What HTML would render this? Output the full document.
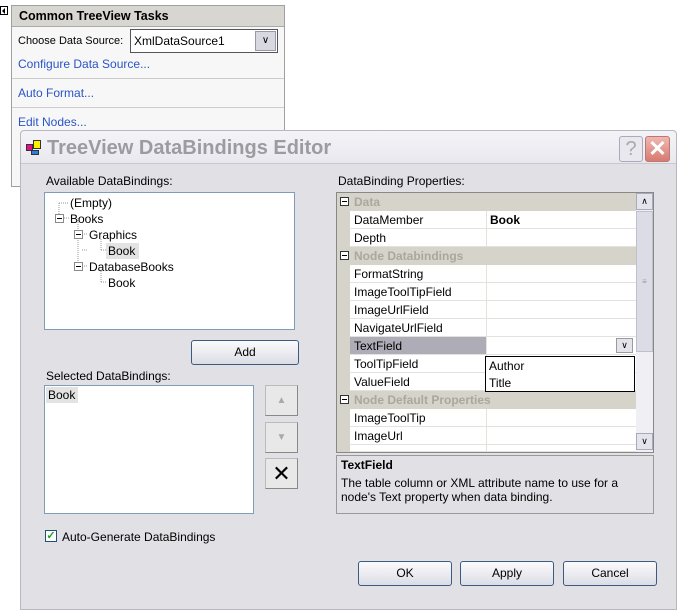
<!DOCTYPE html>
<html><head><style>
*{box-sizing:border-box;margin:0;padding:0}
body{width:689px;height:600px;background:#fff;position:relative;overflow:hidden;font-family:"Liberation Sans",Arial,sans-serif;font-size:12px;color:#000}
.a{position:absolute}
.lnk{color:#2a54c8}
.row{position:absolute;left:350px;width:286px;height:18px;border-bottom:1px solid #e4e2dc;background:#fff}
.row span{position:absolute;left:4px;top:2px}
.row i{position:absolute;left:136px;top:0;bottom:0;border-left:1px solid #e4e2dc}
.cat{position:absolute;left:337px;width:299px;height:18px;background:#d6d3ca;color:#aaa79e;font-weight:bold}
.cat b{position:absolute;left:3px;top:4px;width:9px;height:9px;border:1px solid #333;background:#fff}
.cat b:after{content:"";position:absolute;left:1px;top:3px;width:5px;height:1px;background:#000}
.cat span{position:absolute;left:17px;top:2px}
.btn{position:absolute;height:25px;border:1px solid #3c5a82;border-radius:3px;background:linear-gradient(#fbfbfd,#dcdce6);text-align:center;line-height:23px}
.sb{position:absolute;width:33px;height:31px;border:1px solid #bbb;border-right-color:#888;border-bottom-color:#888;background:#e8e8e8}
</style></head><body>
<div class="a" style="left:0;top:6px;width:8px;height:9px;border:1px solid #000;background:#fff"></div>
<div class="a" style="left:2px;top:8px;width:0;height:0;border:3px solid transparent;border-right:3px solid #000;border-left:0"></div>
<div class="a" style="left:11px;top:5px;width:274px;height:182px;background:#f7f7f7;border:1px solid #a0a0a0"></div>
<div class="a" style="left:12px;top:6px;width:272px;height:21px;background:#d8d6d0;border-bottom:1px solid #aaa"></div>
<div class="a" style="left:19px;top:9px;font-weight:bold;font-size:12.5px">Common TreeView Tasks</div>
<div class="a" style="left:18px;top:35px;font-size:11px">Choose Data Source:</div>
<div class="a" style="left:130px;top:29px;width:148px;height:24px;border:1px solid #555;background:#fff"><span style="position:absolute;left:3px;top:4px">XmlDataSource1</span><div style="position:absolute;right:1px;top:1px;width:21px;height:20px;background:#d8d8e0;border:1px solid #99a;text-align:center;font-size:10px;line-height:18px">&#x2228;</div></div>
<div class="a lnk" style="left:18px;top:57px">Configure Data Source...</div>
<div class="a" style="left:12px;top:78px;width:272px;border-top:1px solid #ccc"></div>
<div class="a lnk" style="left:18px;top:86px">Auto Format...</div>
<div class="a" style="left:12px;top:107px;width:272px;border-top:1px solid #ccc"></div>
<div class="a lnk" style="left:18px;top:115px">Edit Nodes...</div>
<div class="a" style="left:20px;top:130px;width:657px;height:480px;background:#e1e0e5;border:1px solid #b8b8c0;border-radius:4px 4px 0 0"></div>
<div class="a" style="left:21px;top:131px;width:655px;height:33px;background:linear-gradient(#f4f4f8,#e8e8ee);border-bottom:1px solid #c8c8d0;border-radius:4px 4px 0 0"></div>
<svg class="a" style="left:26px;top:140px" width="16" height="16"><rect x="0.5" y="4.5" width="6" height="6" fill="#e0108a" stroke="#333"/><rect x="7.5" y="0.5" width="7" height="8" fill="#ffee00" stroke="#333"/><rect x="5.5" y="10.5" width="7" height="4" fill="#2a80e0" stroke="#333"/></svg>
<div class="a" style="left:47px;top:137px;font-size:20px;font-weight:bold;color:#9c9ca0">TreeView DataBindings Editor</div>
<div class="a" style="left:619px;top:136px;width:24px;height:26px;border:1px solid #aab;border-radius:3px;background:#e8e8ee;color:#aaa;font-size:20px;text-align:center;line-height:24px">?</div>
<div class="a" style="left:645px;top:136px;width:25px;height:26px;border:1px solid #b77;border-radius:3px;background:linear-gradient(#f0b8b0,#d87a70);color:#fff;font-size:22px;text-align:center;line-height:24px;font-weight:bold">&#x2715;</div>
<div class="a" style="left:46px;top:174px">Available DataBindings:</div>
<div class="a" style="left:44px;top:192px;width:251px;height:138px;background:#fff;border:1px solid #7f9db9"></div>
<div class="a" style="left:70px;top:196px">(Empty)</div>
<div class="a" style="left:70px;top:212px">Books</div>
<div class="a" style="left:89px;top:228px">Graphics</div>
<div class="a" style="left:106px;top:243px;width:33px;height:16px;background:#e3e3e3"></div>
<div class="a" style="left:108px;top:244px">Book</div>
<div class="a" style="left:89px;top:260px">DatabaseBooks</div>
<div class="a" style="left:108px;top:276px">Book</div>
<svg class="a" style="left:44px;top:192px" width="100" height="100" stroke="#999" stroke-dasharray="1 1" fill="none">
<path d="M15 11H25M15 11V22M20 26H25M34 42H44M34 26V74M38 58H44M57 47V58M57 58H62M57 79V90M57 90H62M38 74H44"/>
<g stroke-dasharray="none"><rect x="11.5" y="22.5" width="8" height="8" fill="#fff" stroke="#8a8a8a"/><path d="M13 26.5h5" stroke="#000"/><rect x="30.5" y="38.5" width="8" height="8" fill="#fff" stroke="#8a8a8a"/><path d="M32 42.5h5" stroke="#000"/><rect x="30.5" y="70.5" width="8" height="8" fill="#fff" stroke="#8a8a8a"/><path d="M32 74.5h5" stroke="#000"/></g>
</svg>
<div class="btn" style="left:191px;top:340px;width:108px">Add</div>
<div class="a" style="left:46px;top:369px">Selected DataBindings:</div>
<div class="a" style="left:44px;top:385px;width:210px;height:129px;background:#fff;border:1px solid #7f9db9"></div>
<div class="a" style="left:46px;top:387px;width:32px;height:16px;background:#e3e3e3;padding:1px 2px">Book</div>
<div class="sb" style="left:265px;top:385px;color:#aaa;text-align:center;line-height:29px;font-size:10px">&#9650;</div>
<div class="sb" style="left:265px;top:422px;color:#aaa;text-align:center;line-height:29px;font-size:10px">&#9660;</div>
<div class="sb" style="left:265px;top:458px;text-align:center;line-height:29px;font-size:22px">&#x2715;</div>
<div class="a" style="left:45px;top:530px;width:12px;height:12px;border:1px solid #1c5180;background:#fff;color:#21a121;font-size:11px;line-height:10px;text-align:center;font-weight:bold">&#x2713;</div>
<div class="a" style="left:62px;top:530px">Auto-Generate DataBindings</div>
<div class="a" style="left:338px;top:174px">DataBinding Properties:</div>
<div class="a" style="left:336px;top:192px;width:318px;height:261px;background:#d6d3ca;border:1px solid #888"></div>
<div class="cat" style="top:193px"><b></b><span>Data</span></div>
<div class="row" style="top:211px"><span>DataMember</span><i></i><span style="left:140px;font-weight:bold">Book</span></div>
<div class="row" style="top:229px"><span>Depth</span><i></i></div>
<div class="cat" style="top:247px"><b></b><span>Node Databindings</span></div>
<div class="row" style="top:265px"><span>FormatString</span><i></i></div>
<div class="row" style="top:283px"><span>ImageToolTipField</span><i></i></div>
<div class="row" style="top:301px"><span>ImageUrlField</span><i></i></div>
<div class="row" style="top:319px"><span>NavigateUrlField</span><i></i></div>
<div class="row" style="top:337px"><div style="position:absolute;left:0;top:0;width:136px;height:17px;background:#aeacb6"></div><span>TextField</span><i></i><div style="position:absolute;right:3px;top:1px;width:17px;height:15px;border:1px solid #99a;background:#e4e4ea;font-size:9px;text-align:center;line-height:13px">&#x2228;</div></div>
<div class="row" style="top:355px"><span>ToolTipField</span><i></i></div>
<div class="row" style="top:373px"><span>ValueField</span><i></i></div>
<div class="cat" style="top:391px"><b></b><span>Node Default Properties</span></div>
<div class="row" style="top:409px"><span>ImageToolTip</span><i></i></div>
<div class="row" style="top:427px"><span>ImageUrl</span><i></i></div>
<div class="row" style="top:445px;height:7px;overflow:hidden"><i></i></div>
<div class="a" style="left:485px;top:356px;width:150px;height:36px;background:#fff;border:1px solid #000"><div style="position:absolute;left:3px;top:2px">Author</div><div style="position:absolute;left:3px;top:19px">Title</div></div>
<div class="a" style="left:636px;top:193px;width:17px;height:259px;background:#f0f0f4"></div>
<div class="a" style="left:636px;top:193px;width:17px;height:17px;background:#e4e4ec;border:1px solid #aab;font-size:9px;text-align:center;line-height:15px">&#x2227;</div>
<div class="a" style="left:636px;top:211px;width:17px;height:141px;background:#dcdce6;border:1px solid #c0c0cc;color:#999;font-size:8px;text-align:center;line-height:140px">&#8801;</div>
<div class="a" style="left:636px;top:433px;width:17px;height:17px;background:#e4e4ec;border:1px solid #aab;font-size:9px;text-align:center;line-height:15px">&#x2228;</div>
<div class="a" style="left:336px;top:455px;width:318px;height:59px;border:1px solid #999;background:#e1e0e5"></div>
<div class="a" style="left:341px;top:458px;font-weight:bold">TextField</div>
<div class="a" style="left:341px;top:476px;line-height:14px">The table column or XML attribute name to use for a<br>node's Text property when data binding.</div>
<div class="btn" style="left:358px;top:561px;width:94px">OK</div>
<div class="btn" style="left:460px;top:561px;width:94px">Apply</div>
<div class="btn" style="left:563px;top:561px;width:94px">Cancel</div>
</body></html>
